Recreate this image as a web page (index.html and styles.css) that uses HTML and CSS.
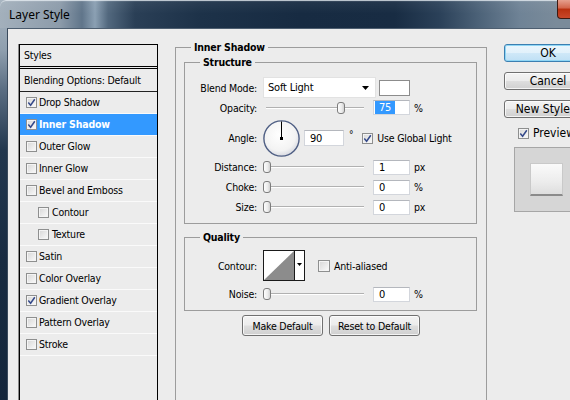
FILE: index.html
```html
<!DOCTYPE html>
<html lang="en">
<head>
<meta charset="utf-8">
<title>Layer Style</title>
<link rel="stylesheet" href="styles.css">
</head>
<body>
<div class="window">
  <header class="titlebar">
    <span class="title">Layer Style</span>
    <span class="close-btn"></span>
  </header>
  <div class="client">
    <nav class="styles-list">
      <div class="list-head">Styles</div>
      <div class="list-item blend">Blending Options: Default</div>
      <div class="list-item"><span class="cb"><svg viewBox="0 0 9 9" width="9" height="9"><path d="M1.3 4.6 L3.6 7.2 L7.8 1.2" fill="none" stroke="#34498a" stroke-width="1.5"/></svg></span>Drop Shadow</div>
      <div class="list-item active"><span class="cb"><svg viewBox="0 0 9 9" width="9" height="9"><path d="M1.3 4.6 L3.6 7.2 L7.8 1.2" fill="none" stroke="#34498a" stroke-width="1.5"/></svg></span>Inner Shadow</div>
      <div class="list-item"><span class="cb"></span>Outer Glow</div>
      <div class="list-item"><span class="cb"></span>Inner Glow</div>
      <div class="list-item"><span class="cb"></span>Bevel and Emboss</div>
      <div class="list-item sub"><span class="cb"></span>Contour</div>
      <div class="list-item sub"><span class="cb"></span>Texture</div>
      <div class="list-item"><span class="cb"></span>Satin</div>
      <div class="list-item"><span class="cb"></span>Color Overlay</div>
      <div class="list-item"><span class="cb"><svg viewBox="0 0 9 9" width="9" height="9"><path d="M1.3 4.6 L3.6 7.2 L7.8 1.2" fill="none" stroke="#34498a" stroke-width="1.5"/></svg></span>Gradient Overlay</div>
      <div class="list-item"><span class="cb"></span>Pattern Overlay</div>
      <div class="list-item"><span class="cb"></span>Stroke</div>
    </nav>

    <fieldset class="group main-group">
      <legend>Inner Shadow</legend>

      <fieldset class="group structure">
        <legend>Structure</legend>
        <div class="row row-blend">
          <span class="lbl">Blend Mode:</span>
          <span class="select"><span>Soft Light</span><svg class="arrow" viewBox="0 0 7 4" width="7" height="4"><path d="M0 0 H7 L3.5 4 Z" fill="#000"/></svg></span>
          <span class="swatch"></span>
        </div>
        <div class="row row-opacity">
          <span class="lbl">Opacity:</span>
          <span class="slider"><span class="thumb" style="left:74px"></span></span>
          <span class="field"><span class="sel">75</span></span>
          <span class="unit">%</span>
        </div>
        <div class="row row-angle">
          <span class="lbl">Angle:</span>
          <svg class="dial" viewBox="0 0 37 37" width="37" height="37">
            <defs>
              <radialGradient id="dialg" cx="0.45" cy="0.4" r="0.6">
                <stop offset="0" stop-color="#ffffff"/>
                <stop offset="0.75" stop-color="#f3f3f3"/>
                <stop offset="1" stop-color="#d9dbe2"/>
              </radialGradient>
            </defs>
            <circle cx="18.5" cy="18.5" r="17.6" fill="url(#dialg)" stroke="#4f5f84" stroke-width="1.4"/>
            <line x1="18.5" y1="18.5" x2="18.5" y2="1.5" stroke="#000" stroke-width="1"/>
            <rect x="17" y="17" width="3" height="3" fill="#000"/>
          </svg>
          <span class="field field-angle">90</span>
          <span class="deg">°</span>
          <span class="cb cb-global"><svg viewBox="0 0 9 9" width="9" height="9"><path d="M1.3 4.6 L3.6 7.2 L7.8 1.2" fill="none" stroke="#34498a" stroke-width="1.5"/></svg></span>
          <span class="cb-text">Use Global Light</span>
        </div>
        <div class="row">
          <span class="lbl">Distance:</span>
          <span class="slider"><span class="thumb" style="left:0px"></span></span>
          <span class="field">1</span>
          <span class="unit">px</span>
        </div>
        <div class="row">
          <span class="lbl">Choke:</span>
          <span class="slider"><span class="thumb" style="left:0px"></span></span>
          <span class="field">0</span>
          <span class="unit">%</span>
        </div>
        <div class="row">
          <span class="lbl">Size:</span>
          <span class="slider"><span class="thumb" style="left:0px"></span></span>
          <span class="field">0</span>
          <span class="unit">px</span>
        </div>
      </fieldset>

      <fieldset class="group quality">
        <legend>Quality</legend>
        <div class="row row-contour">
          <span class="lbl">Contour:</span>
          <svg class="contour" viewBox="0 0 42 31" width="42" height="31">
            <rect x="0.5" y="0.5" width="41" height="30" fill="#fff" stroke="#1a1a1a"/>
            <path d="M1 30 L31 1 L31 30 Z" fill="#8c8c8c"/>
            <line x1="31.5" y1="0.5" x2="31.5" y2="30.5" stroke="#1a1a1a"/>
            <path d="M34 13 H39 L36.5 16 Z" fill="#000"/>
          </svg>
          <span class="cb cb-aa"></span>
          <span class="cb-text">Anti-aliased</span>
        </div>
        <div class="row row-noise">
          <span class="lbl">Noise:</span>
          <span class="slider"><span class="thumb" style="left:0px"></span></span>
          <span class="field">0</span>
          <span class="unit">%</span>
        </div>
      </fieldset>

      <div class="defaults">
        <button class="btn btn-make">Make Default</button>
        <button class="btn btn-reset">Reset to Default</button>
      </div>
    </fieldset>

    <aside class="actions">
      <button class="btn side-btn default">OK</button>
      <button class="btn side-btn">Cancel</button>
      <button class="btn side-btn">New Style...</button>
      <div class="preview-row">
        <span class="cb"><svg viewBox="0 0 9 9" width="9" height="9"><path d="M1.3 4.6 L3.6 7.2 L7.8 1.2" fill="none" stroke="#34498a" stroke-width="1.5"/></svg></span>
        <span class="preview-text">Preview</span>
      </div>
      <div class="preview-box"><div class="preview-swatch"></div></div>
    </aside>
  </div>
</div>
</body>
</html>
```

FILE: styles.css
```css
html, body {
  margin: 0;
  padding: 0;
  overflow: hidden;
  background: #15283d;
}

.window {
  width: 606px;
  height: 420px;
  display: flex;
  flex-direction: column;
  background: linear-gradient(to bottom, #a9b6c2 0, #8f9fae 50px, #5a6d82 90px, #22374e 150px, #182b41 260px, #13253a 420px);
  font-family: "DejaVu Sans Condensed", "DejaVu Sans", sans-serif;
  font-size: 10.5px;
  letter-spacing: -0.2px;
  color: #000;
}

.titlebar {
  height: 28px;
  flex: none;
  display: flex;
  align-items: flex-start;
  justify-content: space-between;
  border-top-left-radius: 6px;
  background:
    linear-gradient(to bottom, rgba(255,255,255,0.35) 0, rgba(255,255,255,0.05) 2px, rgba(255,255,255,0) 14px),
    linear-gradient(to right, #a3b0bc 0, #8c9baa 60px, #60758a 82px, #8ba0b3 95px, #52687e 108px, #2a3f56 135px, #1d3249 200px, #172b42 300px, #182c43 395px, #2b4159 440px, #4d6379 480px, #6f8396 520px, #7a8b9a 556px);
  box-shadow: inset 0 1px 0 rgba(230,236,242,0.7);
}

.title {
  font-family: "Noto Sans", "Open Sans", sans-serif;
  font-size: 12px;
  letter-spacing: 0;
  color: #000;
  margin: 7px 0 0 9px;
  line-height: 16px;
}

.close-btn {
  width: 43px;
  height: 19px;
  margin-right: 6px;
  box-sizing: border-box;
  border: 1px solid #3c1a12;
  border-top: none;
  border-radius: 0 0 4px 4px;
  background: linear-gradient(to bottom, #e6a08e 0, #d2654a 45%, #b8300f 50%, #c9482a 100%);
}

.client {
  flex: 1;
  margin-left: 7px;
  display: flex;
  align-items: flex-start;
  padding-left: 11px;
  background: #ececec;
  border-top: 1px solid #4d5e70;
  border-left: 1px solid #3a4a5c;
}

/* ----- left list ----- */
.styles-list {
  flex: none;
  width: 139px;
  height: 380px;
  margin-top: 15px;
  box-sizing: border-box;
  border: 1px solid #000;
  box-shadow: -1px 0 0 #8a8a8a;
}

.list-head {
  height: 21px;
  display: flex;
  align-items: center;
  padding-left: 4px;
  padding-bottom: 1px;
  box-sizing: border-box;
  border-bottom: 1px solid #000;
  margin-bottom: 1px;
  height: 22px;
}

.list-item {
  height: 22px;
  box-sizing: border-box;
  display: flex;
  align-items: center;
  gap: 2px;
  padding-left: 6px;
  padding-bottom: 1px;
  border-bottom: 1px solid #fafafa;
  white-space: nowrap;
}

.list-item.blend {
  height: 24px;
  padding-left: 4px;
  border-top: 1px solid #000;
  border-bottom: 1px solid #222;
}

.list-item.sub {
  padding-left: 18px;
  gap: 3px;
}

.list-item.active {
  background: #3399ff;
  color: #fff;
  font-weight: bold;
}

.cb {
  flex: none;
  width: 11px;
  height: 11px;
  box-sizing: border-box;
  border: 1px solid #8e8f8f;
  background: linear-gradient(135deg, #d6d6d6 0, #ececec 60%, #fbfbfb 100%);
  box-shadow: inset 0 0 0 1px #f4f4f4;
  display: inline-flex;
  align-items: center;
  justify-content: center;
}

.cb svg {
  display: block;
}

/* ----- group boxes ----- */
.group {
  margin: 0;
  padding: 0;
  min-width: 0;
  border: 1px solid #9c9c9c;
  box-sizing: border-box;
}

.group > legend {
  font-weight: bold;
  line-height: 13px;
  padding: 0 3px;
  margin-left: 15px;
}

.main-group {
  flex: none;
  width: 312px;
  height: 390px;
  margin: 12px 0 0 17px;
  padding-top: 2px;
}

.structure {
  margin: 0 9px 0 8px;
  padding: 8px 0 6px 0;
}

.quality {
  margin: 7px 9px 0 8px;
  padding: 6px 0 6px 0;
}

.row {
  display: flex;
  align-items: center;
  height: 20px;
  white-space: nowrap;
}

.row-blend { height: 21px; }
.row-opacity { height: 19px; }
.row-angle { height: 38px; margin-top: 2px; }
.row-contour { height: 31px; }
.row-noise { margin-top: 3px; }

.lbl {
  flex: none;
  width: 72px;
  margin-right: 6px;
  text-align: right;
}

.select {
  flex: none;
  width: 113px;
  height: 21px;
  box-sizing: border-box;
  background: #fff;
  border: 1px solid #e2e2e2;
  display: flex;
  align-items: center;
  justify-content: space-between;
  padding: 0 6px 0 4px;
  font-size: 11px;
}

.swatch {
  flex: none;
  width: 31px;
  height: 16px;
  margin-left: 3px;
  box-sizing: border-box;
  background: #fff;
  border: 1px solid #8c8c8c;
}

.slider {
  flex: none;
  position: relative;
  width: 104px;
  height: 14px;
}

.slider::before {
  content: "";
  position: absolute;
  left: 3px;
  right: 3px;
  top: 6px;
  height: 1px;
  background: #b1b1b1;
  box-shadow: 0 1px 0 #ffffff;
}

.thumb {
  position: absolute;
  top: 1px;
  width: 8px;
  height: 12px;
  box-sizing: border-box;
  border: 1px solid #7d7d7d;
  border-radius: 3px;
  background: linear-gradient(to right, #fdfdfd 0, #ececec 60%, #d2d2d2 100%);
}

.field {
  flex: none;
  width: 37px;
  height: 15px;
  margin-left: 6px;
  box-sizing: border-box;
  background: #fff;
  border: 1px solid #d3d6dc;
  border-top-color: #b4b7bd;
  display: flex;
  align-items: center;
  padding-left: 5px;
  font-size: 11px;
}

.field .sel {
  background: #3399ff;
  color: #fff;
  margin-left: -4px;
  padding: 0 4px 0 4px;
  line-height: 13px;
}

.unit {
  margin-left: 4px;
}

.dial {
  flex: none;
  display: block;
}

.field-angle {
  width: 40px;
  margin-left: 4px;
  height: 16px;
}

.deg {
  margin-left: 5px;
  align-self: flex-start;
  margin-top: 10px;
  font-size: 10px;
}

.cb-global {
  margin-left: 9px;
}

.cb-text {
  margin-left: 4px;
}

.contour {
  flex: none;
  display: block;
}

.cb-aa {
  margin-left: 13px;
  width: 12px;
  height: 12px;
}

/* ----- buttons ----- */
.btn {
  box-sizing: border-box;
  border: 1px solid #707070;
  border-radius: 3px;
  background: linear-gradient(to bottom, #f3f3f3 0, #ececec 48%, #dedede 52%, #d0d0d0 100%);
  box-shadow: inset 0 0 0 1px rgba(255,255,255,0.75);
  font-family: inherit;
  font-size: 10.5px;
  letter-spacing: -0.2px;
  color: #000;
  padding: 0;
  margin: 0;
  white-space: nowrap;
  overflow: hidden;
}

.defaults {
  display: flex;
  justify-content: center;
  gap: 6px;
  margin-top: 4px;
}

.btn-make { width: 81px; height: 21px; }
.btn-reset { width: 91px; height: 21px; }

.actions {
  flex: none;
  width: 88px;
  margin: 15px 0 0 17px;
  display: flex;
  flex-direction: column;
  align-items: flex-start;
}

.side-btn {
  width: 88px;
  height: 18px;
  margin-bottom: 10px;
  font-size: 12px;
  letter-spacing: 0;
  line-height: 14px;
}

.side-btn.default {
  border-color: #3c7fb1;
  box-shadow: inset 0 0 0 1px #8fd6f5;
  background: linear-gradient(to bottom, #eaf6fd 0, #e2f1fb 48%, #cfe8f8 52%, #bfe0f5 100%);
}

.preview-row {
  display: flex;
  align-items: center;
  margin: -1px 0 0 14px;
  height: 12px;
}

.preview-text {
  margin-left: 4px;
  font-size: 12px;
  letter-spacing: 0;
}

.preview-box {
  margin: 8px 0 0 10px;
  width: 65px;
  height: 65px;
  box-sizing: border-box;
  border: 1px solid #a6a6a6;
  background: #d6d6d6;
  display: flex;
  align-items: center;
  justify-content: center;
}

.preview-swatch {
  width: 33px;
  height: 33px;
  box-sizing: border-box;
  border: 1px solid #c9c9c9;
  border-bottom: 2px solid #8b8b8b;
  background: linear-gradient(to bottom, #fafafa 0, #ececec 60%, #dedede 100%);
}
```
